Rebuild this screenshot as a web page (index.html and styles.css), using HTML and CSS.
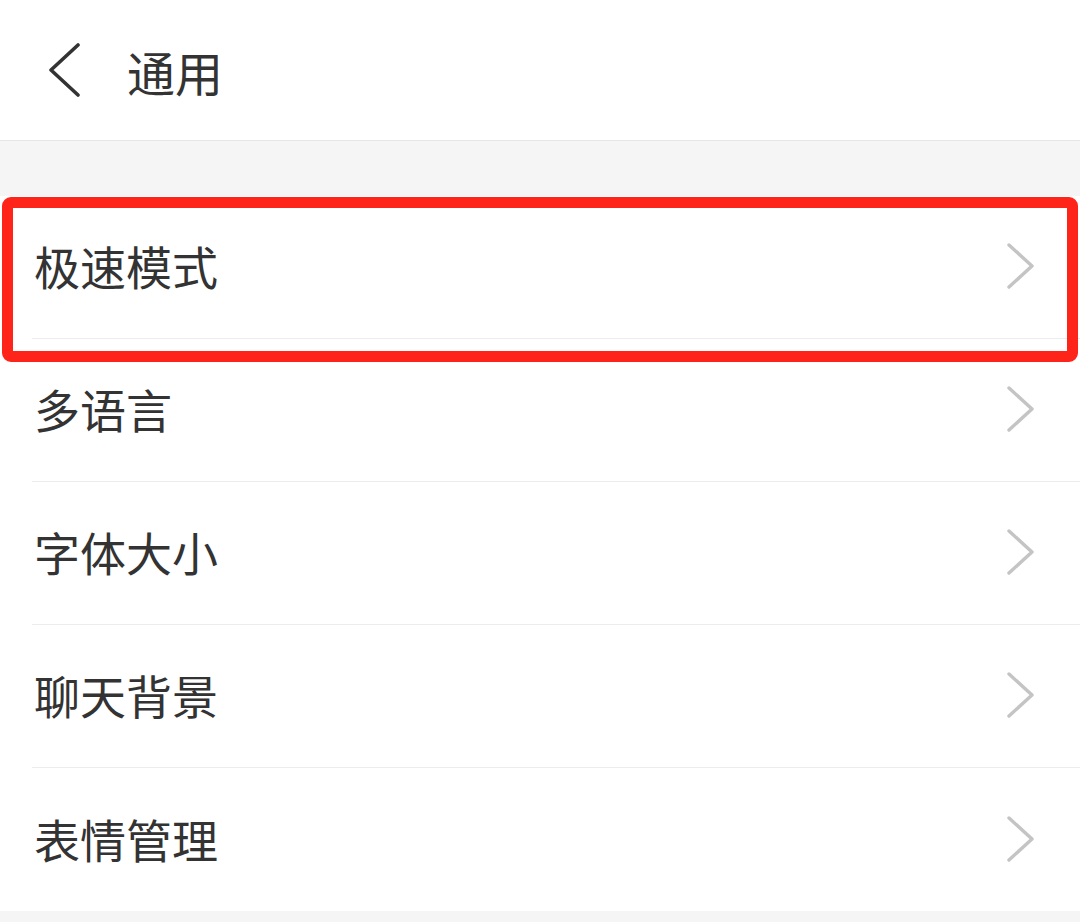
FILE: index.html
```html
<!DOCTYPE html>
<html lang="zh-CN">
<head>
  <meta charset="UTF-8">
  <title>通用</title>
  <link rel="stylesheet" href="styles.css">
</head>
<body>
  <div class="header">
    <svg class="back" width="36" height="56" viewBox="0 0 36 56">
      <polyline points="31,2 4,27 31,52" fill="none" stroke="#333" stroke-width="3.6" stroke-linecap="round" stroke-linejoin="round"/>
    </svg>
    <span class="title">通用</span>
  </div>
  <div class="gap"></div>
  <div class="list">
    <div class="item"><span>极速模式</span><svg class="arrow" width="30" height="46" viewBox="0 0 30 46"><polyline points="3,2 26,23 3,44" fill="none" stroke="#c4c4c4" stroke-width="3.4" stroke-linecap="round" stroke-linejoin="round"/></svg></div>
    <div class="item"><span>多语言</span><svg class="arrow" width="30" height="46" viewBox="0 0 30 46"><polyline points="3,2 26,23 3,44" fill="none" stroke="#c4c4c4" stroke-width="3.4" stroke-linecap="round" stroke-linejoin="round"/></svg></div>
    <div class="item"><span>字体大小</span><svg class="arrow" width="30" height="46" viewBox="0 0 30 46"><polyline points="3,2 26,23 3,44" fill="none" stroke="#c4c4c4" stroke-width="3.4" stroke-linecap="round" stroke-linejoin="round"/></svg></div>
    <div class="item"><span>聊天背景</span><svg class="arrow" width="30" height="46" viewBox="0 0 30 46"><polyline points="3,2 26,23 3,44" fill="none" stroke="#c4c4c4" stroke-width="3.4" stroke-linecap="round" stroke-linejoin="round"/></svg></div>
    <div class="item last"><span>表情管理</span><svg class="arrow" width="30" height="46" viewBox="0 0 30 46"><polyline points="3,2 26,23 3,44" fill="none" stroke="#c4c4c4" stroke-width="3.4" stroke-linecap="round" stroke-linejoin="round"/></svg></div>
    <div class="highlight"></div>
  </div>
  <div class="footer"></div>
</body>
</html>
```

FILE: styles.css
```css
body {
  margin: 0;
  background: #f5f5f5;
  color: #333;
  font-family: "Noto Sans CJK SC", "Noto Sans", sans-serif;
}
.header {
  height: 140px;
  background: #fff;
  border-bottom: 1px solid #e6e6e6;
  display: flex;
  align-items: center;
  padding-left: 47px;
}
.back {
  margin-right: 44px;
  margin-top: 2px;
}
.title {
  font-size: 48px;
  line-height: 1;
  margin-top: 2px;
}
.gap {
  height: 55px;
}
.list {
  position: relative;
  background: #fff;
}
.item {
  height: 142px;
  margin-left: 32px;
  border-bottom: 1px solid #ececec;
  display: flex;
  align-items: center;
  justify-content: space-between;
  padding-right: 44px;
  font-size: 46px;
}
.item span {
  margin-left: 2px;
  margin-top: -4px;
}
.item.last {
  border-bottom: none;
  height: 143px;
}
.arrow {
  margin-top: -2px;
}
.highlight {
  position: absolute;
  top: 1px;
  left: 2px;
  width: 1054px;
  height: 143px;
  border: 11px solid #fe2419;
  border-radius: 9px;
}
.footer {
  height: 12px;
}
```
